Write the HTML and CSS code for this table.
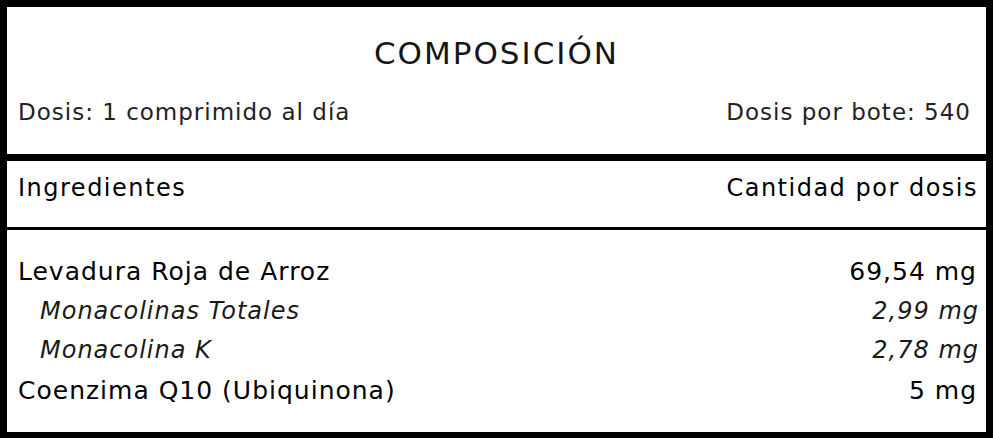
FILE: index.html
```html
<!DOCTYPE html>
<html lang="es">
<head>
<meta charset="utf-8">
<title>Composición</title>
<link rel="stylesheet" href="styles.css">
</head>
<body>
<div class="card">
  <div class="top">
    <h1 class="title">COMPOSICIÓN</h1>
    <div class="dose">
      <span>Dosis: 1 comprimido al día</span>
      <span>Dosis por bote: 540</span>
    </div>
  </div>
  <div class="colhead">
    <span>Ingredientes</span>
    <span>Cantidad por dosis</span>
  </div>
  <div class="rows">
    <div class="row"><span>Levadura Roja de Arroz</span><span>69,54 mg</span></div>
    <div class="row sub"><span>Monacolinas Totales</span><span>2,99 mg</span></div>
    <div class="row sub"><span>Monacolina K</span><span>2,78 mg</span></div>
    <div class="row"><span>Coenzima Q10 (Ubiquinona)</span><span>5 mg</span></div>
  </div>
</div>
</body>
</html>
```

FILE: styles.css
```css
* { box-sizing: border-box; }
html, body { margin: 0; padding: 0; background: #fff; }
body {
  font-family: "DejaVu Sans", "Liberation Sans", sans-serif;
  color: #000;
}
.card {
  width: 993px;
  height: 438px;
  border: 7px solid #000;
  border-bottom-width: 6px;
  display: flex;
  flex-direction: column;
}
.top {
  height: 154px;
  border-bottom: 7px solid #000;
  display: flex;
  flex-direction: column;
}
.title {
  margin: 0;
  padding-top: 26px;
  line-height: 40px;
  font-size: 31px;
  letter-spacing: 2px;
  font-weight: normal;
  text-align: center;
  color: #151515;
}
.dose {
  margin-top: 24px;
  line-height: 30px;
  font-size: 23px;
  letter-spacing: 1px;
  display: flex;
  justify-content: space-between;
  padding: 0 15px 0 11px;
  color: #222;
}
.colhead {
  height: 69px;
  padding: 12px 8px 0 11px;
  line-height: 30px;
  font-size: 24px;
  letter-spacing: 1.5px;
  display: flex;
  justify-content: space-between;
  align-items: flex-start;
  border-bottom: 3px solid #000;
}
.rows {
  padding: 22px 0 0 0;
}
.row {
  height: 39.5px;
  line-height: 39.5px;
  font-size: 25px;
  letter-spacing: 1px;
  display: flex;
  justify-content: space-between;
  padding: 0 9px 0 11px;
}
.row.sub {
  font-size: 24px;
  font-style: italic;
  padding: 0 7px 0 33px;
  color: #1a1a1a;
}
```
